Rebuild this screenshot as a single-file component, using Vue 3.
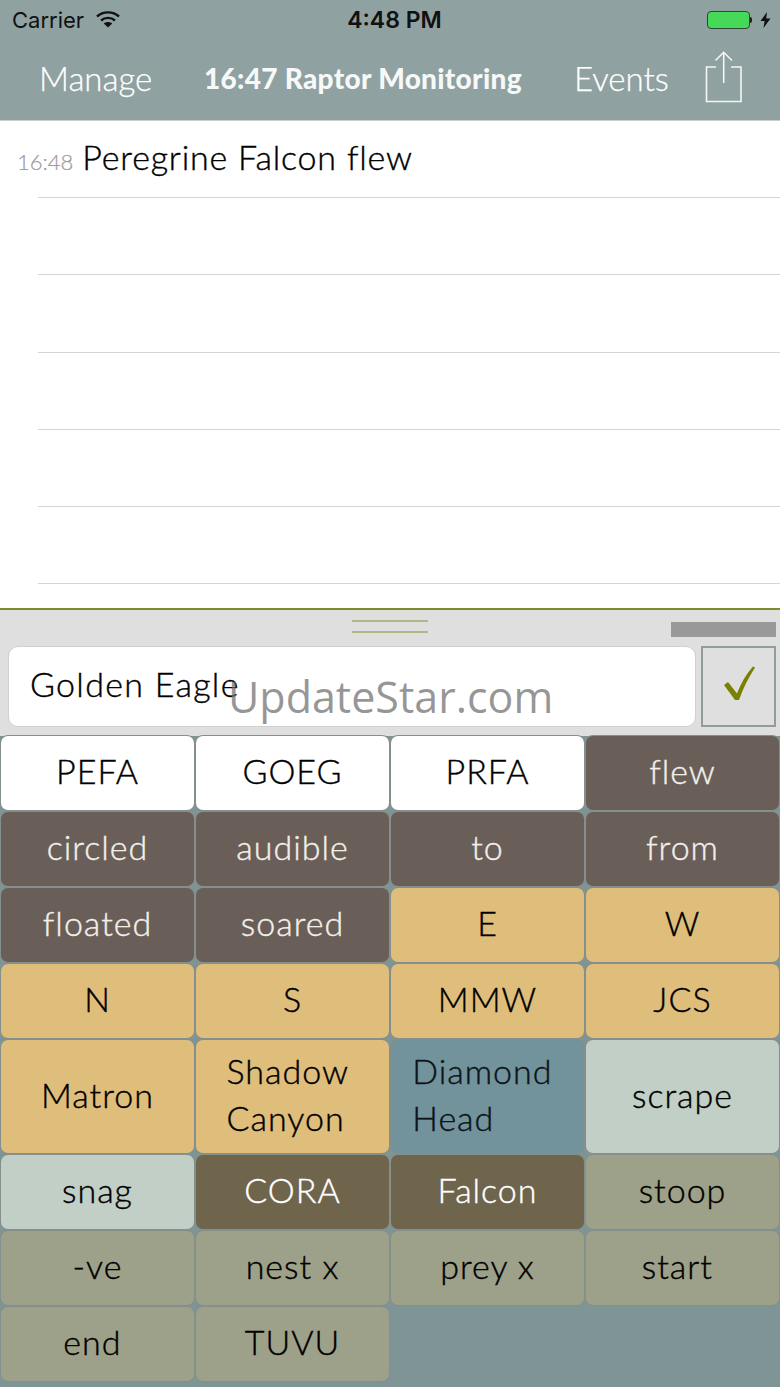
<script setup>
const rows = [
  { time: '16:48', text: 'Peregrine Falcon flew' },
  { id: 2 },
  { id: 3 },
  { id: 4 },
  { id: 5 },
  { id: 6 },
]

// kind picks the colour of the button
const buttons = [
  { label: 'PEFA', kind: 'white' },
  { label: 'GOEG', kind: 'white' },
  { label: 'PRFA', kind: 'white' },
  { label: 'flew', kind: 'dark' },
  { label: 'circled', kind: 'dark' },
  { label: 'audible', kind: 'dark' },
  { label: 'to', kind: 'dark' },
  { label: 'from', kind: 'dark' },
  { label: 'floated', kind: 'dark' },
  { label: 'soared', kind: 'dark' },
  { label: 'E', kind: 'tan' },
  { label: 'W', kind: 'tan' },
  { label: 'N', kind: 'tan' },
  { label: 'S', kind: 'tan' },
  { label: 'MMW', kind: 'tan' },
  { label: 'JCS', kind: 'tan' },
  { label: 'Matron', kind: 'tan' },
  { label: 'Shadow \nCanyon', kind: 'tan' },
  { label: 'Diamond \nHead', kind: 'blue' },
  { label: 'scrape', kind: 'pale' },
  { label: 'snag', kind: 'pale' },
  { label: 'CORA', kind: 'brown' },
  { label: 'Falcon', kind: 'brown' },
  { label: 'stoop', kind: 'sage' },
  { label: '-ve', kind: 'sage' },
  { label: 'nest x', kind: 'sage' },
  { label: 'prey x', kind: 'sage' },
  { label: 'start ', kind: 'sage' },
  { label: 'end ', kind: 'sage' },
  { label: 'TUVU', kind: 'sage' },
]
</script>

<template>
  <div class="screen">
    <header class="top">
      <div class="status">
        <div class="status-left">
          <span>Carrier</span>
          <svg class="wifi" width="24" height="18" viewBox="0 0 24 18">
            <path d="M1 6.5C7 1 17 1 23 6.5" fill="none" stroke="#111" stroke-width="2.4" />
            <path d="M5 10.5C9 7 15 7 19 10.5" fill="none" stroke="#111" stroke-width="2.4" />
            <path d="M12 17.5L7.8 13.4C10 11.4 14 11.4 16.2 13.4Z" fill="#111" />
          </svg>
        </div>
        <span class="clock">4:48 PM</span>
        <div class="status-right">
          <span class="battery"></span>
          <span class="battery-tip"></span>
          <svg class="bolt" width="11" height="18" viewBox="0 0 11 16">
            <path d="M7 0L0.5 9H4.6L3.5 16L10.5 6.4H6.2Z" fill="#111" />
          </svg>
        </div>
      </div>
      <nav class="nav">
        <span class="nav-link manage">Manage</span>
        <span class="nav-title">16:47 Raptor Monitoring</span>
        <span class="nav-link events">Events</span>
        <svg class="share" width="38" height="52" viewBox="0 0 38 52">
          <path d="M11 16H1.5V50.5H36V16H26" fill="none" stroke="#fff" stroke-width="1.6" opacity=".9" />
          <path d="M18.7 32V1.5M10.5 9.5L18.7 1.3L27 9.5" fill="none" stroke="#fff" stroke-width="1.6" opacity=".9" />
        </svg>
      </nav>
    </header>

    <ul class="list">
      <li v-for="row in rows" :key="row.time || row.id" class="row">
        <span class="row-time">{{ row.time }}</span>
        <span class="row-text">{{ row.text }}</span>
      </li>
    </ul>

    <section class="panel">
      <div class="handle-row">
        <div class="handle"></div>
        <div class="meter"></div>
      </div>
      <div class="entry">
        <div class="entry-input">Golden Eagle</div>
        <div class="entry-ok">
          <svg width="34" height="38" viewBox="0 0 34 38">
            <path d="M2 19L6 16L15 27.5C19 17 24 8 31 0.5L33 1.5C27 11 21 22 17 34H13Z" fill="#7a8000" />
          </svg>
        </div>
      </div>
    </section>

    <div class="grid">
      <button
        v-for="btn in buttons"
        :key="btn.label"
        class="key"
        :class="btn.kind"
      >
        <span>{{ btn.label }}</span>
      </button>
    </div>

    <div class="watermark">UpdateStar.com</div>
  </div>
</template>

<style>
html,
body {
  margin: 0;
  padding: 0;
}
</style>

<style scoped>
.screen {
  position: relative;
  width: 780px;
  height: 1387px;
  overflow: hidden;
  background: #fff;
  font-family: Lato, "Open Sans", sans-serif;
  color: #000;
}

.top {
  height: 121px;
  background: #8fa1a1;
  border-bottom: 1px solid #c9cfcf;
  box-sizing: border-box;
}

.status {
  height: 40px;
  padding: 0 9px 0 12px;
  display: flex;
  align-items: center;
  justify-content: space-between;
  font-family: Inter, sans-serif;
  font-size: 22px;
  color: #111;
}

.status-left {
  width: 300px;
  display: flex;
  align-items: center;
  gap: 12px;
}

.wifi {
  margin-top: -3px;
}

.clock {
  font-size: 23px;
  font-weight: 600;
  margin-left: 6px;
}

.status-right {
  width: 300px;
  display: flex;
  align-items: center;
  justify-content: flex-end;
}

.battery {
  width: 43px;
  height: 18px;
  box-sizing: border-box;
  border: 1px solid #2c4a33;
  border-radius: 4px;
  background: #46d858;
}

.battery-tip {
  width: 2px;
  height: 6px;
  background: #222;
  border-radius: 0 2px 2px 0;
  margin-right: 8px;
}

.nav {
  height: 75px;
  display: flex;
  align-items: center;
  color: #fff;
}

.nav-link {
  font-size: 33px;
  font-weight: 300;
  -webkit-text-stroke: 0.25px currentColor;
}

.manage {
  margin-left: 39px;
  width: 165px;
}

.nav-title {
  width: 370px;
  font-size: 28px;
  font-weight: 900;
  letter-spacing: 0.3px;
  color: #f7f8f8;
}

.events {
  width: 131px;
}

.share {
  margin-top: -1px;
}

.list {
  list-style: none;
  margin: 0;
  padding: 0;
  height: 487px;
  overflow: hidden;
}

.row {
  position: relative;
  height: 77.2px;
  box-sizing: border-box;
  display: flex;
  align-items: baseline;
  padding: 14px 0 0 17px;
  gap: 9px;
}

.row::after {
  content: "";
  position: absolute;
  left: 38px;
  right: 0;
  bottom: 0;
  height: 1px;
  background: #d5d5d5;
}

.row-time {
  font-size: 22px;
  font-weight: 300;
  color: #9a9a9a;
  -webkit-text-stroke: 0.2px currentColor;
}

.row-text {
  font-size: 34px;
  line-height: 44px;
  font-weight: 300;
  letter-spacing: 0.8px;
  -webkit-text-stroke: 0.4px currentColor;
}

.panel {
  height: 128px;
  box-sizing: border-box;
  background: #dedfde;
  border-top: 2px solid #7f8a2c;
}

.handle-row {
  position: relative;
  height: 36px;
  display: flex;
  justify-content: center;
}

.handle {
  width: 76px;
  height: 9px;
  margin-top: 10px;
  border-top: 2px solid #b0b888;
  border-bottom: 2px solid #b0b888;
}

.meter {
  position: absolute;
  left: 671px;
  top: 12px;
  width: 105px;
  height: 15px;
  background: #999;
}

.entry {
  display: flex;
  gap: 5px;
  padding: 0 4px 0 8px;
}

.entry-input {
  flex: 1;
  height: 81px;
  box-sizing: border-box;
  padding: 0 21px;
  background: #fff;
  border: 1px solid #d0d0d0;
  border-radius: 10px;
  font-size: 34px;
  font-weight: 300;
  letter-spacing: 1.3px;
  line-height: 73px;
  -webkit-text-stroke: 0.4px currentColor;
}

.entry-ok {
  width: 75px;
  height: 81px;
  box-sizing: border-box;
  border: 2px solid #919b9b;
  display: flex;
  align-items: center;
  justify-content: center;
  padding-bottom: 4px;
}

.grid {
  height: 651px;
  box-sizing: border-box;
  padding: 0 1px;
  background: #7f9595;
  display: grid;
  grid-template-columns: repeat(4, 193px);
  grid-template-rows: repeat(4, 74px) 113px repeat(3, 74px);
  gap: 2px;
}

.key {
  margin: 0;
  padding: 0 0 5px;
  border: 0;
  border-radius: 7px;
  box-shadow: 0 0 0 1px #858f8c;
  font-family: inherit;
  font-size: 34px;
  font-weight: 300;
  letter-spacing: 1px;
  line-height: 47px;
  white-space: pre;
  text-align: center;
  -webkit-text-stroke: 0.4px currentColor;
}

.key span {
  display: inline-block;
  text-align: left;
}

.white {
  background: #fff;
  color: #000;
}

.dark {
  background: #6a5e59;
  color: #f2efe9;
}

.tan {
  background: #dfbd7b;
  color: #000;
}

.blue {
  background: #72929c;
  color: #0c1418;
}

.pale {
  background: #c2cfc7;
  color: #000;
}

.brown {
  background: #6f644c;
  color: #fff;
}

.sage {
  background: #9ea189;
  color: #000;
}

.watermark {
  position: absolute;
  left: 228px;
  top: 668px;
  font-family: "Open Sans", sans-serif;
  font-size: 43px;
  line-height: 58px;
  color: rgba(110, 110, 110, 0.72);
  pointer-events: none;
}
</style>
